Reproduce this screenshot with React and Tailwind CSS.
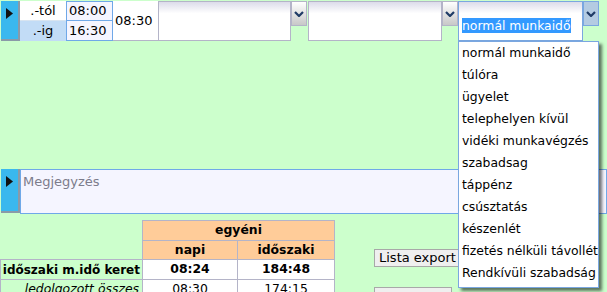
import React from "react";

const options = [
  "normál munkaidő",
  "túlóra",
  "ügyelet",
  "telephelyen kívül",
  "vidéki munkavégzés",
  "szabadsag",
  "táppénz",
  "csúsztatás",
  "készenlét",
  "fizetés nélküli távollét",
  "Rendkívüli szabadság",
];

function Chevron() {
  return (
    <svg width="10" height="6" viewBox="0 0 10 6" className="block">
      <path d="M1 1 L5 5 L9 1" fill="none" stroke="#1f3b66" strokeWidth="2.2" />
    </svg>
  );
}

function BlueHandle({ h }) {
  return (
    <div
      className={`flex ${h} w-[19px] shrink-0 items-start justify-center border-r-2 border-b-2 border-r-[#8a9aa8] border-b-[#8a9aa8] bg-[#3ab8ee] pt-[7px]`}
    >
      <svg width="7" height="11" viewBox="0 0 7 11">
        <path d="M0 0 L7 5.5 L0 11 Z" fill="#111" />
      </svg>
    </div>
  );
}

function Select({ width, active, children }) {
  return (
    <div className="flex items-start">
      <div
        className={`h-[40px] ${width} border ${
          active ? "border-[#7aa7e0]" : "border-[#b4b4c8]"
        } bg-gradient-to-b from-[#dcdcea] via-white via-30% to-white pl-[3px] pt-[15px]`}
      >
        {children}
      </div>
      <div
        className={`flex h-[25px] w-[16px] items-start justify-center border pt-[9px] ${
          active
            ? "border-[#7aa7e0] bg-[#b4cbe2]"
            : "border-[#b4b4c8] bg-gradient-to-b from-white to-[#c8c8c8]"
        }`}
      >
        <Chevron />
      </div>
    </div>
  );
}

export default function App() {
  return (
    <div className="relative h-[292px] w-[607px] overflow-hidden bg-[#ccffcc] font-['DejaVu_Sans',Verdana,sans-serif] text-[12.4px] text-black">
      {/* top row */}
      <div className="flex pt-px pl-px">
        <BlueHandle h="h-[40px]" />
        <div className="flex w-[46px] flex-col text-[13px]">
          <div className="flex h-[20px] items-center justify-center border-b border-[#d8e4f0] bg-white">.-tól</div>
          <div className="flex h-[20px] items-center justify-center bg-[#c2dcf6]">.-ig</div>
        </div>
        <div className="flex w-[47px] flex-col border border-[#6fa8e8] bg-[#f5f5ff] text-[13px]">
          <div className="flex h-[19px] items-center pl-[2px] border-b border-[#6fa8e8]">08:00</div>
          <div className="flex h-[19px] items-center pl-[2px]">16:30</div>
        </div>
        <div className="flex h-[40px] w-[45px] items-center border-b border-[#b4b4c8] bg-white pl-[2px] text-[13px]">08:30</div>
        <div className="flex">
          <Select width="w-[133px]" />
          <div className="w-px" />
          <Select width="w-[134px]" />
          <Select width="w-[125px]" active>
            <span className="bg-[#3399ff] text-white">normál munkaidő</span>
          </Select>
        </div>
      </div>

      {/* note */}
      <div className="mt-[128px] flex pl-px">
        <BlueHandle h="h-[44px]" />
        <div className="h-[45px] flex-1 border border-[#6fa8e8] bg-[#f5f5ff] pl-[2px] pt-[2px] text-[13px] text-[#7c7c8c]">
          Megjegyzés
        </div>
      </div>

      {/* summary */}
      <div className="mt-[6px] flex items-start">
        <table className="w-[334px] table-fixed border-collapse whitespace-nowrap">
          <colgroup>
            <col className="w-[142px]" />
            <col className="w-[95px]" />
            <col className="w-[97px]" />
          </colgroup>
          <tbody>
            <tr className="h-[19px]">
              <td className="p-0"></td>
              <td colSpan={2} className="border border-[#b4b4c8] bg-[#ffcc99] p-0 text-center font-bold">
                egyéni
              </td>
            </tr>
            <tr className="h-[19px]">
              <td className="p-0"></td>
              <td className="border border-[#b4b4c8] bg-[#ffcc99] p-0 text-center font-bold">napi</td>
              <td className="border border-[#b4b4c8] bg-[#ffcc99] p-0 text-center font-bold">időszaki</td>
            </tr>
            <tr className="h-[20px]">
              <td className="overflow-hidden border border-[#b4b4c8] p-0 pr-[2px] text-right text-[12px] font-bold">időszaki m.idő keret</td>
              <td className="border border-[#b4b4c8] bg-white p-0 text-center font-bold">08:24</td>
              <td className="border border-[#b4b4c8] bg-white p-0 text-center font-bold">184:48</td>
            </tr>
            <tr className="h-[20px]">
              <td className="overflow-hidden border border-[#b4b4c8] p-0 pr-[3px] text-right italic">ledolgozott összes</td>
              <td className="border border-[#b4b4c8] bg-white p-0 text-center">08:30</td>
              <td className="border border-[#b4b4c8] bg-white p-0 text-center">174:15</td>
            </tr>
          </tbody>
        </table>
        <div className="ml-[39px] mt-[29px] flex flex-col gap-[20px]">
          <button className="h-[18px] w-[110px] border border-[#a8a8a8] bg-[#efefef] pl-[4px] text-left text-[13px] leading-[16px] text-[#000]">
            Lista export
          </button>
          <div className="h-[18px] w-[78px] border border-[#a8a8a8] bg-[#efefef]" />
        </div>
      </div>

      {/* open dropdown list */}
      <div className="absolute left-[458px] top-[41px] h-[247px] w-[141px] overflow-hidden border border-[#7aa7e0] bg-white shadow-[3px_3px_3px_rgba(0,0,0,0.55)]">
        {options.map((o) => (
          <div key={o} className="h-[22px] whitespace-nowrap pl-[3px] leading-[22px]">
            {o}
          </div>
        ))}
      </div>
    </div>
  );
}
